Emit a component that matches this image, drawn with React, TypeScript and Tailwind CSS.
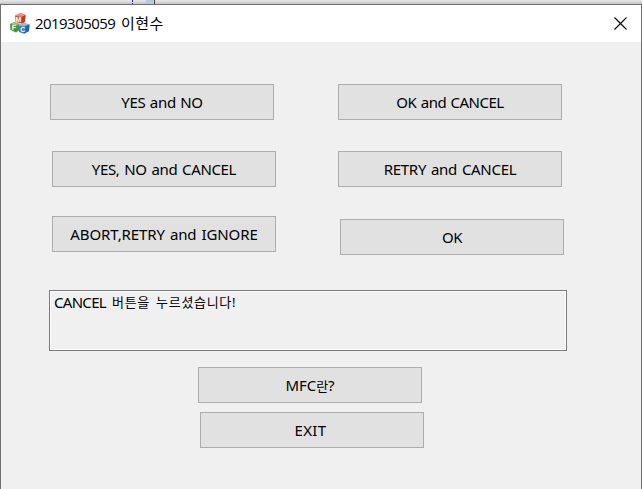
import type { ReactNode } from "react";

function DialogButton({ children, className }: { children: ReactNode; className: string }) {
  return (
    <button
      className={`flex h-9 w-56 shrink-0 items-center justify-center border border-[#adadad] bg-[#e1e1e1] pt-px leading-none whitespace-nowrap text-black ${className}`}
    >
      {children}
    </button>
  );
}

function MfcIcon() {
  return (
    <svg width="20" height="21" viewBox="0 0 20 21" className="shrink-0">
      <path d="M5 2.500 L10.500 0 L15.500 2 L15 9 L11 10.500 L5.500 9Z" fill="#dc4f36" />
      <path d="M5 2.500 L10.500 0 L15.500 2 L11.500 4Z" fill="#f0937c" />
      <path d="M11.500 4 L15.500 2 L15 9 L11 10.500Z" fill="#c23a22" />
      <path d="M0 11 L4.500 9 L9.500 11 L9.500 17 L6 19.500 L0.500 17Z" fill="#4c913e" />
      <path d="M0 11 L4.500 9 L9.500 11 L6 12.500Z" fill="#9cc886" />
      <path d="M8.500 12.500 L13.500 10 L19.500 11.500 L19 18 L14 20.700 L9 19Z" fill="#3d80c2" />
      <path d="M8.500 12.500 L13.500 10 L19.500 11.500 L14.500 13.500Z" fill="#86bde3" />
      <path d="M14.500 13.500 L19.500 11.500 L19 18 L14 20.700Z" fill="#2862a3" />
      <g fill="#fff" fontFamily="Liberation Sans, sans-serif" fontWeight="700" fontSize="7">
        <text x="5.500" y="9">M</text>
        <text x="1.800" y="17">F</text>
        <text x="10.300" y="19">C</text>
      </g>
    </svg>
  );
}

export default function App() {
  return (
    <div className="flex h-[489px] w-[642px] flex-col overflow-hidden bg-[#f0f0f0] font-['Noto_Sans','Noto_Sans_CJK_KR',sans-serif] text-[15px] text-black">
      <div className="flex h-1 shrink-0 bg-linear-to-b from-[#e8e8e8] to-[#c5c5c5]">
        <div className="ml-[132px] h-full w-px border-l border-dotted border-[#2020c0]" />
        <div className="ml-[13px] h-full w-2 bg-[#b9c9d9]" />
        <div className="h-full w-px bg-[#444]" />
      </div>
      <div className="flex min-h-0 grow flex-col border-x border-t border-[#707070]">
        <header className="flex h-[37px] shrink-0 items-center bg-white pr-[14px] pl-[9px]">
          <MfcIcon />
          <h1 className="ml-[5px] flex grow items-baseline text-[15px] leading-none whitespace-nowrap">
            <span className="w-[86px] font-['Open_Sans'] tracking-[-0.55px]">2019305059</span>
            <span className="tracking-[0.5px]">이현수</span>
          </h1>
          <svg width="13" height="13" viewBox="0 0 13 13" className="shrink-0">
            <path d="M0.500 0.500 L12.500 12.500 M12.500 0.500 L0.500 12.500" stroke="#000" strokeWidth="1.100" />
          </svg>
        </header>
        <main className="flex flex-col pt-[42px]">
          <div className="flex pl-[49px]">
            <DialogButton className="tracking-[-0.3px] [word-spacing:0.8px]">YES and NO</DialogButton>
            <DialogButton className="ml-16 tracking-[-0.5px] [word-spacing:1px]">OK and CANCEL</DialogButton>
          </div>
          <div className="mt-[31px] flex pl-[51px]">
            <DialogButton className="tracking-[-0.35px] [word-spacing:1.2px]">YES, NO and CANCEL</DialogButton>
            <DialogButton className="ml-[62px] tracking-[-0.3px] [word-spacing:1.3px]">RETRY and CANCEL</DialogButton>
          </div>
          <div className="mt-[29px] flex items-start pl-[51px]">
            <DialogButton className="tracking-[-0.1px] [word-spacing:1.2px]">ABORT,RETRY and IGNORE</DialogButton>
            <DialogButton className="mt-[3px] ml-16 tracking-[-0.5px]">OK</DialogButton>
          </div>
          <div className="mt-[35px] ml-12 h-[61px] w-[518px] border border-[#7a7a7a]">
            <div className="flex h-full items-start border border-white pt-[3px] pl-[3px] leading-none whitespace-nowrap">
              <span className="w-[58px] tracking-[-0.7px]">CANCEL</span>
              <span className="text-[13px] leading-[15px] tracking-[0.7px] [word-spacing:2px]">버튼을 누르셨습니다!</span>
            </div>
          </div>
          <DialogButton className="mt-4 ml-[197px] tracking-[-0.1px]">
            <span>MFC<span className="text-[13px]">란</span>?</span>
          </DialogButton>
          <DialogButton className="mt-[9px] ml-[199px] pr-[3px] tracking-[0.3px]">EXIT</DialogButton>
        </main>
      </div>
    </div>
  );
}
